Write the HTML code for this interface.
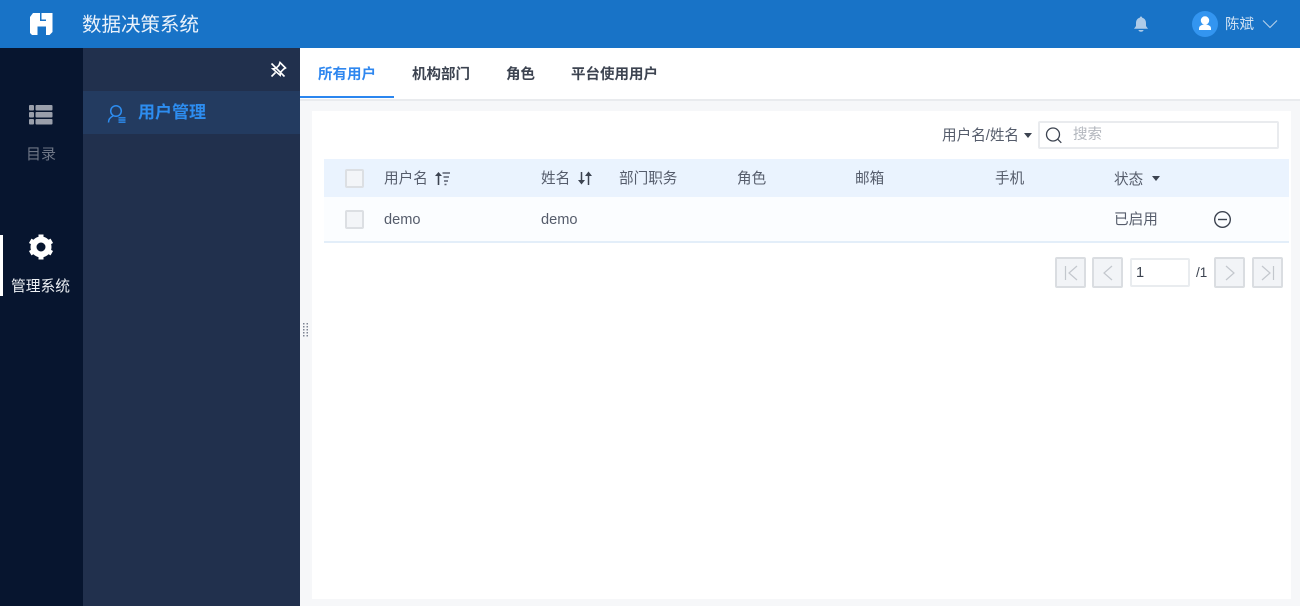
<!DOCTYPE html>
<html lang="zh"><head><meta charset="utf-8"><title>数据决策系统</title>
<style>
html,body{margin:0;padding:0;width:1300px;height:606px;overflow:hidden;background:#f6f7f9}
body{font-family:"Liberation Sans","Noto Sans CJK SC",sans-serif;position:relative}
.a{position:absolute;white-space:nowrap}
svg{position:absolute;display:block}
.t{font-size:14.6px;line-height:20px;color:#555c6b}
.tab{font-size:14.5px;font-weight:700;line-height:20px;color:#3c4350;top:65px}
.b{position:absolute;top:257px;width:31px;height:31px;box-sizing:border-box;background:#f2f4f7;border:2px solid #dadde1;border-radius:2px}
.cb{position:absolute;left:345px;width:19px;height:19px;box-sizing:border-box;background:#f3f5f8;border:2px solid #dcdfe3;border-radius:2px}
</style></head><body>
<div class="a" style="left:0;top:0;width:1300px;height:48px;background:#1873c7"></div>
<svg style="left:30px;top:13px" width="23" height="22" viewBox="0 0 23 22"><path fill="#fff" d="M3 0H10V8H16V13.500H7.500V22H2L0 20V4zM11.500 0H22.500V19L19.500 22H16V6.500H11.500z"/></svg>
<div class="a" style="left:82px;top:13px;font-size:19.500px;line-height:24px;color:#eaf2fb">数据决策系统</div>
<svg style="left:1133px;top:16px" width="16" height="17" viewBox="0 0 16 17"><path fill="#aecbe8" d="M8 .5c.8 0 1.200.5 1.200 1.200C11.800 2.300 13 4.500 13 7v3l2 2.800H1L3 10V7C3 4.500 4.200 2.300 6.800 1.700 6.800 1 7.200.5 8 .5zM5.500 14h5c0 1-1.100 1.800-2.500 1.800S5.500 15 5.500 14z"/></svg>
<div class="a" style="left:1192px;top:11px;width:26px;height:26px;border-radius:50%;background:#3395f0"></div>
<svg style="left:1192px;top:11px" width="26" height="26" viewBox="0 0 26 26"><circle cx="13" cy="9.500" r="4.200" fill="#fff"/><path fill="#fff" d="M7 19v-1.500c0-2.500 2.500-4 6-4s6 1.500 6 4V19z"/></svg>
<div class="a" style="left:1225px;top:15px;font-size:14.500px;line-height:20px;color:#cfe1f3">陈斌</div>
<svg style="left:1262px;top:19px" width="16" height="10" viewBox="0 0 16 10"><path fill="none" stroke="#b5d0ea" stroke-width="1.100" d="M1 1.500L8 8.500l7-7"/></svg>

<div class="a" style="left:0;top:48px;width:83px;height:558px;background:#07152f"></div>
<div class="a" style="left:83px;top:48px;width:217px;height:558px;background:#21304d"></div>
<div class="a" style="left:83px;top:91px;width:217px;height:43px;background:#233b60"></div>
<svg style="left:29px;top:104px" width="24" height="21" viewBox="0 0 24 21"><g fill="#9a9fab"><rect y="1" width="5" height="5.500" rx="1"/><rect y="8" width="5" height="5.500" rx="1"/><rect y="15" width="5" height="5.500" rx="1"/><rect x="6.500" y="1" width="17" height="5.500" rx="1"/><rect x="6.500" y="8" width="17" height="5.500" rx="1"/><rect x="6.500" y="15" width="17" height="5.500" rx="1"/></g></svg>
<div class="a" style="left:26px;top:145px;font-size:15px;line-height:20px;color:#6d7585">目录</div>
<div class="a" style="left:0;top:235px;width:3px;height:61px;background:#fff"></div>
<svg style="left:28px;top:234px" width="26" height="26" viewBox="0 0 26 26"><circle cx="13" cy="13" r="7.500" fill="none" stroke="#fff" stroke-width="6"/><g stroke="#fff" stroke-width="5"><path d="M13 .5v4M13 21.500v4M2.200 6.800l3.500 2M20.300 17.200l3.500 2M2.200 19.200l3.500-2M20.300 8.800l3.500-2"/></g></svg>
<div class="a" style="left:11px;top:277px;font-size:14.750px;line-height:20px;color:#eef1f5">管理系统</div>
<svg style="left:270px;top:61px" width="17" height="17" viewBox="0 0 17 17"><g fill="none" stroke="#fff" stroke-width="1.600"><path d="M10 1.500l5.500 5.500-1.800 1-3.200 3.200-.3 3L2.800 7.800l3-.3L9 4.300zM5.500 11.500L1.500 15.500"/><path d="M1.500 2.500L14.500 15.500"/></g></svg>
<svg style="left:107px;top:103px" width="20" height="20" viewBox="0 0 20 20"><circle cx="9" cy="8" r="5.300" fill="none" stroke="#2d8df0" stroke-width="1.500"/><path fill="none" stroke="#2d8df0" stroke-width="1.500" d="M1.500 19.500c0-3 1.800-5.300 4.500-6.500"/><path stroke="#2d8df0" stroke-width="1.400" d="M11.500 14.800h7M11.500 17h7M11.500 19.200h7"/></svg>
<div class="a" style="left:138px;top:101px;font-size:17px;font-weight:700;line-height:24px;color:#2d8df0">用户管理</div>

<div class="a" style="left:300px;top:48px;width:1000px;height:51px;background:#fff;border-bottom:2px solid #e9ebee"></div>
<div class="a" style="left:300px;top:96px;width:94px;height:2px;background:#2b86ef"></div>
<div class="a tab" style="left:318px;color:#2f87ef">所有用户</div>
<div class="a tab" style="left:412px">机构部门</div>
<div class="a tab" style="left:506px">角色</div>
<div class="a tab" style="left:571px">平台使用用户</div>

<div class="a" style="left:312px;top:111px;width:979px;height:488px;background:#fff"></div>
<div class="a t" style="left:942px;top:126px">用户名/姓名</div>
<div class="a" style="left:1024px;top:133px;border:4.500px solid transparent;border-top:5px solid #3c4350;border-bottom:0"></div>
<div class="a" style="left:1038px;top:121px;width:241px;height:28px;box-sizing:border-box;background:#fff;border:2px solid #e9ebee;border-radius:2px"></div>
<svg style="left:1044px;top:126px" width="19" height="19" viewBox="0 0 19 19"><circle cx="9" cy="8.500" r="6.500" fill="none" stroke="#3c4350" stroke-width="1.300"/><path stroke="#3c4350" stroke-width="1.300" d="M13.800 13.300l3.500 3.500"/></svg>
<div class="a" style="left:1073px;top:125px;font-size:14.500px;line-height:20px;color:#b3b7be">搜索</div>

<div class="a" style="left:324px;top:159px;width:965px;height:38px;background:#eaf3fe"></div>
<div class="a" style="left:324px;top:197px;width:965px;height:44px;background:#fbfdff"></div>
<div class="a" style="left:324px;top:241px;width:965px;height:2px;background:#e3eef9"></div>
<div class="cb" style="top:169px"></div>
<div class="cb" style="top:210px"></div>
<div class="a t" style="left:384px;top:169px">用户名</div>
<svg style="left:434px;top:171px" width="17" height="15" viewBox="0 0 17 15"><path fill="none" stroke="#3c4350" stroke-width="1.600" d="M4.500 14V2"/><path fill="#3c4350" d="M1 5l3.500-4L8 5z"/><path stroke="#5a6170" stroke-width="1.400" d="M8.500 2h7.500M9.500 6h5.500M10 10h4M10.500 13.500h2"/></svg>
<div class="a t" style="left:541px;top:169px">姓名</div>
<svg style="left:577px;top:171px" width="16" height="15" viewBox="0 0 16 15"><path fill="none" stroke="#3c4350" stroke-width="1.500" d="M4.500 1v11M11.500 14V3"/><path fill="#3c4350" d="M1 9l3.500 4.500L8 9zM8 5l3.500-4.500L15 5z"/></svg>
<div class="a t" style="left:619px;top:169px">部门职务</div>
<div class="a t" style="left:737px;top:169px">角色</div>
<div class="a t" style="left:855px;top:169px">邮箱</div>
<div class="a t" style="left:995px;top:169px">手机</div>
<div class="a t" style="left:1114px;top:170px">状态</div>
<div class="a" style="left:1152px;top:176px;border:4.500px solid transparent;border-top:5px solid #3c4350;border-bottom:0"></div>
<div class="a t" style="left:384px;top:210px">demo</div>
<div class="a t" style="left:541px;top:210px">demo</div>
<div class="a t" style="left:1114px;top:210px">已启用</div>
<svg style="left:1213px;top:210px" width="19" height="19" viewBox="0 0 19 19"><circle cx="9.500" cy="9.500" r="7.800" fill="none" stroke="#3c4350" stroke-width="1.400"/><path stroke="#3c4350" stroke-width="1.400" d="M5 9.500h9"/></svg>

<div class="b" style="left:1055px"></div>
<svg style="left:1055px;top:257px" width="32" height="32" viewBox="0 0 32 32"><path fill="none" stroke="#c3c7cd" stroke-width="1.200" d="M10.500 9v14M22 9l-8 7 8 7"/></svg>
<div class="b" style="left:1092px"></div>
<svg style="left:1092px;top:257px" width="32" height="32" viewBox="0 0 32 32"><path fill="none" stroke="#c3c7cd" stroke-width="1.200" d="M20 9l-8 7 8 7"/></svg>
<div class="a" style="left:1130px;top:258px;width:60px;height:29px;box-sizing:border-box;background:#fff;border:2px solid #e9ecef;border-radius:2px"></div>
<div class="a t" style="left:1136px;top:263px;color:#3c4350">1</div>
<div class="a t" style="left:1196px;top:263px;font-size:13.500px;color:#3c4350">/1</div>
<div class="b" style="left:1214px"></div>
<svg style="left:1214px;top:257px" width="32" height="32" viewBox="0 0 32 32"><path fill="none" stroke="#c3c7cd" stroke-width="1.200" d="M12 9l8 7-8 7"/></svg>
<div class="b" style="left:1252px"></div>
<svg style="left:1252px;top:257px" width="32" height="32" viewBox="0 0 32 32"><path fill="none" stroke="#c3c7cd" stroke-width="1.200" d="M21.500 9v14M10 9l8 7-8 7"/></svg>

<svg style="left:303px;top:323px" width="6" height="15" viewBox="0 0 6 15"><g fill="#7d8494"><rect x="0" y="0" width="1.500" height="1.500"/><rect x="3.500" y="0" width="1.500" height="1.500"/><rect x="0" y="3" width="1.500" height="1.500"/><rect x="3.500" y="3" width="1.500" height="1.500"/><rect x="0" y="6" width="1.500" height="1.500"/><rect x="3.500" y="6" width="1.500" height="1.500"/><rect x="0" y="9" width="1.500" height="1.500"/><rect x="3.500" y="9" width="1.500" height="1.500"/><rect x="0" y="12" width="1.500" height="1.500"/><rect x="3.500" y="12" width="1.500" height="1.500"/></g></svg>
</body></html>
